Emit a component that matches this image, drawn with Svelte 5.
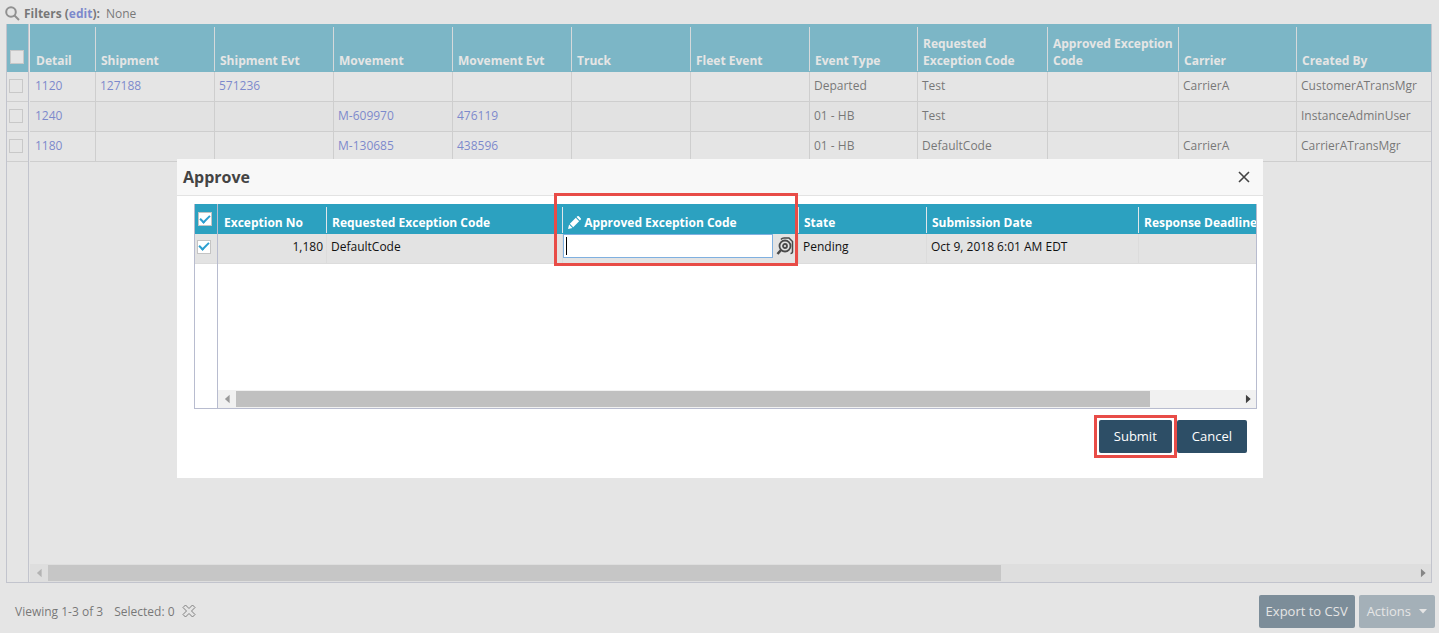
<script lang="ts">
    const columns = [
        { key: 'detail', label: 'Detail', width: 65, link: true },
        { key: 'shipment', label: 'Shipment', width: 119, link: true },
        { key: 'shipmentEvt', label: 'Shipment Evt', width: 119, link: true },
        { key: 'movement', label: 'Movement', width: 119, link: true },
        { key: 'movementEvt', label: 'Movement Evt', width: 119, link: true },
        { key: 'truck', label: 'Truck', width: 119 },
        { key: 'fleetEvent', label: 'Fleet Event', width: 119 },
        { key: 'eventType', label: 'Event Type', width: 108 },
        { key: 'requested', label: 'Requested Exception Code', width: 130 },
        { key: 'approved', label: 'Approved Exception Code', width: 131 },
        { key: 'carrier', label: 'Carrier', width: 118 },
        { key: 'createdBy', label: 'Created By' }
    ]

    const rows: Record<string, string>[] = [
        { detail: '1120', shipment: '127188', shipmentEvt: '571236', eventType: 'Departed', requested: 'Test', carrier: 'CarrierA', createdBy: 'CustomerATransMgr' },
        { detail: '1240', movement: 'M-609970', movementEvt: '476119', eventType: '01 - HB', requested: 'Test', createdBy: 'InstanceAdminUser' },
        { detail: '1180', movement: 'M-130685', movementEvt: '438596', eventType: '01 - HB', requested: 'DefaultCode', carrier: 'CarrierA', createdBy: 'CarrierATransMgr' }
    ]

    let selected = $state([false, false, false])
    let allSelected = $state(false)
    let dialogOpen = $state(true)
    let approveAll = $state(true)
    let approveRow = $state(true)
    let code = $state('')

    let selectedCount = $derived(selected.filter(Boolean).length)

    function toggleAll() {
        selected = selected.map(() => allSelected)
    }

    function clearSelection() {
        allSelected = false
        toggleAll()
    }
</script>

{#snippet scrollbar(size: number)}
    <div class="scrollbar">
        <svg class="arrow" viewBox="0 0 17 17"><path d="M11 4.5v8L6.500 8.500z" fill="#9a9a9a" /></svg>
        <div class="track"><div class="thumb" style="width: {size}%"></div></div>
        <svg class="arrow" viewBox="0 0 17 17"><path d="M7.500 4.500v8L12 8.500z" fill="#404040" /></svg>
    </div>
{/snippet}

<div class="page">
    <header class="filters">
        <svg class="search" viewBox="0 0 15 15"><circle cx="6" cy="6" r="4.800" /><path d="M9.500 9.500l4.500 4.500" /></svg>
        <span><b>Filters (<a href="#edit">edit</a>):</b></span>
        <span class="none">None</span>
    </header>

    <main class="grid">
        <div class="frozen">
            <div class="check-head tall"><input type="checkbox" aria-label="Select all" bind:checked={allSelected} onchange={toggleAll} /></div>
            {#each rows as row, i}
                <div class="check-row"><input type="checkbox" aria-label="Select {row.detail}" bind:checked={selected[i]} /></div>
            {/each}
        </div>
        <div class="pane">
            <table>
                <colgroup>
                    {#each columns as col}
                        <col style={col.width ? `width: ${col.width}px` : ''} />
                    {/each}
                </colgroup>
                <thead>
                    <tr class="tall">
                        {#each columns as col}
                            <th>{col.label}</th>
                        {/each}
                    </tr>
                </thead>
                <tbody>
                    {#each rows as row}
                        <tr>
                            {#each columns as col}
                                <td>
                                    {#if col.link && row[col.key]}
                                        <a href="#{row[col.key]}">{row[col.key]}</a>
                                    {:else}
                                        {row[col.key] ?? ''}
                                    {/if}
                                </td>
                            {/each}
                        </tr>
                    {/each}
                </tbody>
            </table>
            {@render scrollbar(69.8)}
        </div>
    </main>

    <footer>
        <span>Viewing 1-3 of 3</span>
        <span>Selected: {selectedCount}</span>
        <button class="clear" aria-label="Clear selection" onclick={clearSelection}>
            <svg viewBox="0 0 14 14"><path d="M3.500 1L7 4.500 10.500 1 13 3.500 9.500 7 13 10.500 10.500 13 7 9.500 3.500 13 1 10.500 4.500 7 1 3.500z" /></svg>
        </button>
        <button class="btn export">Export to CSV</button>
        <button class="btn actions" disabled>Actions <svg viewBox="0 0 8 5"><path d="M0 0h8L4 4.500z" fill="currentColor" /></svg></button>
    </footer>
</div>

{#if dialogOpen}
    <div class="overlay">
        <div class="dialog" role="dialog" aria-labelledby="dialog-title">
            <div class="title-bar">
                <h2 id="dialog-title">Approve</h2>
                <button class="close" aria-label="Close" onclick={() => (dialogOpen = false)}>
                    <svg viewBox="0 0 12 12"><path d="M1 1l10 10M11 1L1 11" /></svg>
                </button>
            </div>

            <div class="grid approve">
                <div class="frozen">
                    <div class="check-head"><input type="checkbox" aria-label="Select all exceptions" bind:checked={approveAll} onchange={() => (approveRow = approveAll)} /></div>
                    <div class="check-row"><input type="checkbox" aria-label="Select exception 1,180" bind:checked={approveRow} /></div>
                </div>
                <div class="pane">
                    <table>
                        <colgroup>
                            <col class="w-no" />
                            <col class="w-code" />
                            <col class="w-code" />
                            <col class="w-state" />
                            <col class="w-date" />
                            <col />
                        </colgroup>
                        <thead>
                            <tr>
                                <th>Exception No</th>
                                <th>Requested Exception Code</th>
                                <th class="marked">
                                    <svg class="pencil" viewBox="0 0 14 14"><path d="M0 14l1.200-4.800 3.600 3.600zM2 8.400L8.400 2 12 5.600 5.600 12zM9.200 1.200l.8-.8a1.200 1.200 0 0 1 1.700 0l1.900 1.900a1.200 1.200 0 0 1 0 1.700l-.8.8z" fill="#fff" /></svg>
                                    <label for="approved-code">Approved Exception Code</label>
                                </th>
                                <th>State</th>
                                <th>Submission Date</th>
                                <th>Response Deadline</th>
                            </tr>
                        </thead>
                        <tbody>
                            <tr>
                                <td class="number">1,180</td>
                                <td>DefaultCode</td>
                                <td class="editor">
                                    <div class="field">
                                        <div class="box">
                                            <span class="caret"></span>
                                            <input id="approved-code" type="text" bind:value={code} />
                                        </div>
                                        <button class="lookup" aria-label="Look up code">
                                            <svg viewBox="0 0 18 18">
                                                <path d="M5 2.500Q6 1 8 1h5l3.500 3.500v10q0 2-2 2" stroke-width="1.500" />
                                                <circle cx="9" cy="9" r="5.500" stroke-width="1.800" />
                                                <circle cx="9" cy="9" r="2" stroke-width="1.800" />
                                                <path d="M5 13l-3.500 4" stroke-width="2.500" />
                                            </svg>
                                        </button>
                                    </div>
                                </td>
                                <td>Pending</td>
                                <td>Oct 9, 2018 6:01 AM EDT</td>
                                <td></td>
                            </tr>
                        </tbody>
                    </table>
                    {@render scrollbar(91.2)}
                </div>
            </div>

            <div class="buttons">
                <button class="btn submit">Submit</button>
                <button class="btn" onclick={() => (dialogOpen = false)}>Cancel</button>
            </div>
        </div>
    </div>
{/if}

<style>
    :global(body) {
        margin: 0;
        background: #fff;
    }

    .page,
    .overlay,
    button,
    input {
        font-family: 'Open Sans', 'Noto Sans', sans-serif;
        font-size: 12px;
        line-height: 17px;
    }

    .page {
        display: flex;
        flex-direction: column;
        height: 100vh;
        color: #222;
    }

    a {
        color: #2c46cc;
        text-decoration: none;
    }

    button {
        border: 0;
        padding: 0;
        background: none;
        cursor: pointer;
    }

    svg {
        display: block;
        fill: none;
    }

    .filters {
        display: flex;
        align-items: center;
        box-sizing: border-box;
        height: 24px;
        padding: 2px 0 0 5px;
    }

    .search {
        width: 15px;
        height: 15px;
        margin-right: 4px;
        stroke: #555;
        stroke-width: 2;
    }

    .none {
        margin-left: 6px;
    }

    .grid {
        flex: 1;
        display: flex;
        min-height: 0;
        margin: 0 7px 0 6px;
        border: 1px solid #b8bccf;
        border-top: 0;
    }

    .frozen {
        flex: none;
        width: 21px;
        border-right: 1px solid #b8bccf;
    }

    .check-head,
    .check-row {
        display: flex;
        box-sizing: border-box;
        height: 30px;
    }

    .check-head {
        align-items: flex-end;
        padding: 0 0 8px 3px;
        background: #2ca1c0;
    }

    .check-row {
        align-items: center;
        padding: 0 0 2px 2px;
        border-bottom: 1px solid #d0d0d0;
    }

    .tall {
        height: 48px;
    }

    input[type='checkbox'] {
        appearance: none;
        display: grid;
        place-items: center;
        box-sizing: border-box;
        width: 14px;
        height: 14px;
        margin: 0;
        border: 1px solid #c4c4c4;
        background: #fff;
    }

    input[type='checkbox']:checked::before {
        content: '';
        box-sizing: border-box;
        width: 10px;
        height: 6px;
        margin-top: -3px;
        border: solid #2c9fd0;
        border-width: 0 0 2px 2px;
        transform: rotate(-45deg);
    }

    .pane {
        flex: 1;
        display: flex;
        flex-direction: column;
        justify-content: space-between;
        min-width: 0;
        overflow-x: clip;
    }

    main .pane {
        padding-left: 1px;
    }

    table {
        width: 100%;
        table-layout: fixed;
        border-collapse: separate;
        border-spacing: 0;
    }

    th {
        box-sizing: border-box;
        height: 30px;
        padding: 0 0 3px 6px;
        vertical-align: bottom;
        text-align: left;
        white-space: nowrap;
        color: #fff;
        background: linear-gradient(#dfe6ea, #dfe6ea) no-repeat left 3px / 1px calc(100% - 4px) #2ca1c0;
    }

    .tall th {
        height: 48px;
        white-space: normal;
    }

    th:first-child {
        background: #2ca1c0;
    }

    td {
        box-sizing: border-box;
        height: 30px;
        padding: 0 4px 2px;
        white-space: nowrap;
        border-left: 1px solid #d0d0d0;
        border-bottom: 1px solid #d0d0d0;
    }

    td:first-child {
        border-left: 0;
        padding-left: 5px;
    }

    tbody tr:nth-child(even) {
        background: #f8f8f8;
    }

    .scrollbar {
        display: flex;
        align-items: center;
        height: 18px;
        background: #f1f1f1;
    }

    .arrow {
        flex: none;
        width: 18px;
        height: 18px;
    }

    .track {
        flex: 1;
    }

    .thumb {
        height: 16px;
        background: #c0c0c0;
    }

    footer {
        display: flex;
        align-items: center;
        box-sizing: border-box;
        height: 50px;
        padding: 6px 4px 0 15px;
    }

    footer span {
        margin-right: 11px;
    }

    .clear svg {
        width: 14px;
        height: 14px;
        margin-left: -4px;
        stroke: #333;
    }

    .btn {
        height: 33px;
        padding: 0 15px;
        border-radius: 2px;
        font-size: 13px;
        color: #fff;
        background: #2d4e66;
    }

    .export {
        margin-left: auto;
        margin-right: 4px;
        padding: 0 7px;
    }

    .actions {
        display: flex;
        align-items: center;
        gap: 8px;
        padding: 0 8px;
        background: #7d95a5;
    }

    .actions svg {
        width: 8px;
        height: 5px;
    }

    .overlay {
        position: fixed;
        inset: 0;
        display: grid;
        align-items: center;
        padding: 4px 176px 0 177px;
        background: rgba(203, 203, 203, 0.5);
    }

    .dialog {
        min-width: 0;
        background: #fff;
        color: #111;
    }

    .title-bar {
        display: flex;
        align-items: center;
        justify-content: space-between;
        height: 36px;
        padding: 0 13px 0 6px;
        border-bottom: 1px solid #e3e3e3;
        background: #f8f8f8;
    }

    h2 {
        margin: 0;
        font-size: 16px;
        color: #444;
    }

    .close svg {
        width: 12px;
        height: 12px;
        stroke: #444;
        stroke-width: 1.6;
    }

    .approve {
        height: 204px;
        margin: 8px 6px 0 17px;
    }

    .approve .frozen {
        width: 22px;
    }

    .approve tbody tr,
    .approve .check-row {
        background: #e3e3e3;
    }

    .approve td,
    .approve .check-row {
        padding-bottom: 4px;
        border-color: #dcdcdc;
    }

    .w-no {
        width: 108px;
    }

    .w-code {
        width: 236px;
    }

    .w-state {
        width: 128px;
    }

    .w-date {
        width: 212px;
    }

    .number {
        padding-right: 3px;
        text-align: right;
    }

    /* callout around the editable column */
    .marked {
        position: relative;
    }

    .marked::after {
        content: '';
        position: absolute;
        z-index: 1;
        top: -11px;
        left: -8px;
        right: 0;
        height: 67px;
        border: 3px solid #e84c47;
        pointer-events: none;
    }

    .pencil {
        display: inline-block;
        width: 13px;
        height: 13px;
        vertical-align: -2px;
    }

    .approve td.editor {
        padding: 0;
    }

    .field {
        display: flex;
        align-items: center;
        gap: 3px;
        padding: 0 4px 5px 0;
    }

    .box {
        flex: 1;
        display: flex;
        align-items: center;
        box-sizing: border-box;
        height: 24px;
        padding: 0 2px;
        border: 1px solid #7fb0e0;
        background: #fff;
    }

    .caret {
        width: 1px;
        height: 18px;
        background: #000;
    }

    .box input {
        flex: 1;
        min-width: 0;
        padding: 0;
        border: 0;
        outline: 0;
        background: none;
    }

    .lookup svg {
        width: 18px;
        height: 18px;
        stroke: #4a4a4a;
    }

    .buttons {
        display: flex;
        justify-content: flex-end;
        gap: 5px;
        padding: 11px 16px 25px;
    }

    .submit {
        position: relative;
    }

    .submit::after {
        content: '';
        position: absolute;
        inset: -5px;
        border: 3px solid #e84c47;
        pointer-events: none;
    }
</style>
